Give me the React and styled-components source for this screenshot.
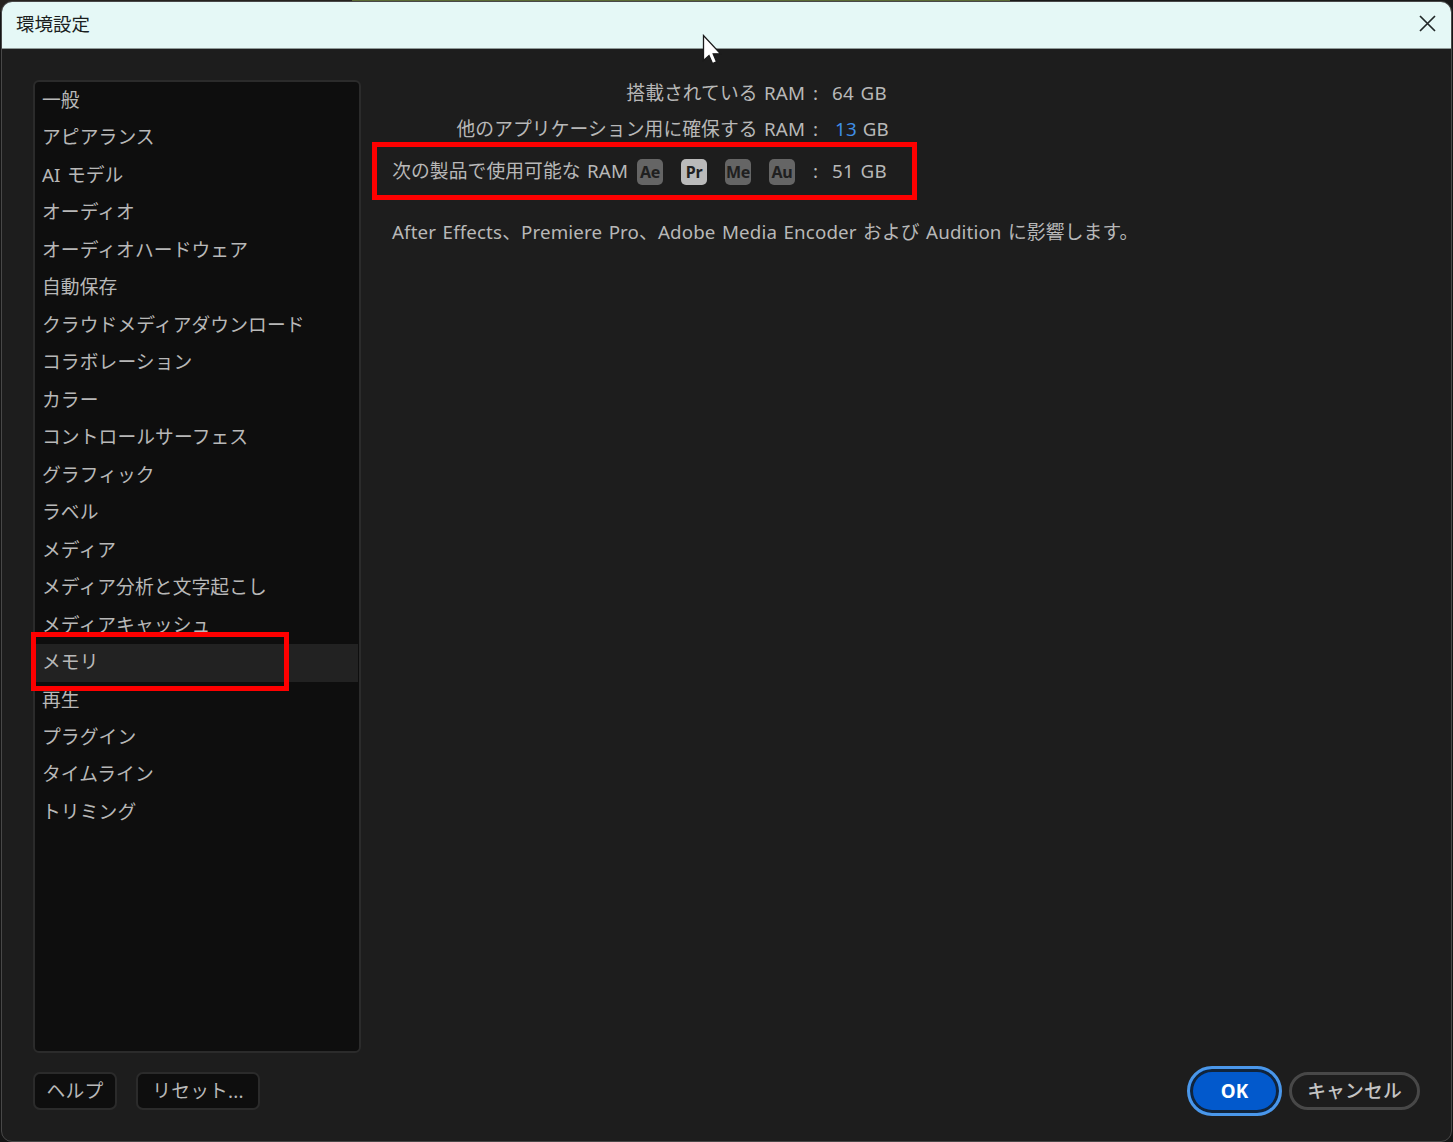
import React from "react";
import styled, { createGlobalStyle, css } from "styled-components";

const GlobalStyle = createGlobalStyle`
  * {
    box-sizing: border-box;
  }

  body {
    margin: 0;
    background: #0b0b0b;
    font-family: "Noto Sans", "Noto Sans CJK JP", sans-serif;
    font-size: 18.75px;
    letter-spacing: 0.1px;
    word-spacing: 1.4px;
    color: #b8b8b8;
  }
`;

const Desktop = styled.div`
  height: 1142px;
  padding: 1px 1px 0 1px;
  overflow: hidden;
  background: linear-gradient(90deg, #26231f 0 352px, #5c6b35 352px 1010px, #191919 1010px) top / 100% 12px no-repeat #151515;
`;

const Dialog = styled.div`
  position: relative;
  display: flex;
  flex-direction: column;
  height: 1141px;
  border: 1px solid #484848;
  border-radius: 11px;
  background: #1d1d1d;
`;

const TitleBar = styled.header`
  display: flex;
  align-items: center;
  justify-content: space-between;
  flex: none;
  height: 47px;
  padding: 0 15px 2px 14px;
  border-bottom: 1px solid #8f9a98;
  border-radius: 10px 10px 0 0;
  background: #e5f8f6;
  color: #1b1f1f;
`;

const Title = styled.h1`
  margin: 0;
  font-size: 18.5px;
  font-weight: 400;
  letter-spacing: 0;
  line-height: 28px;
`;

const CloseButton = styled.button`
  display: flex;
  padding: 0 0 1px;
  border: 0;
  background: none;
  color: #222828;
`;

const Body = styled.div`
  display: flex;
  flex: 1;
  gap: 31px;
  padding: 31px 31px 0 31px;
`;

const Sidebar = styled.ul`
  flex: none;
  width: 328px;
  height: 973px;
  margin: 0;
  padding: 0 1px;
  border: 2px solid #2b2b2b;
  border-radius: 6px;
  background: #0e0e0e;
  list-style: none;
`;

const SidebarItem = styled.li`
  height: 37.47px;
  padding-left: 6px;
  line-height: 36px;
  white-space: nowrap;
  ${(props) =>
    props.$active &&
    css`
      background: #222222;
    `}
`;

const Content = styled.main`
  flex: 1;
`;

const Row = styled.div`
  display: flex;
  align-items: center;
  width: 498px;
  height: 26px;
  margin-top: ${(props) => props.$top || 0}px;
  line-height: 26px;
  white-space: nowrap;
`;

const Label = styled.span`
  flex: 1;
  text-align: right;
`;

const Colon = styled.span`
  width: 27px;
  padding-left: 8px;
`;

const Value = styled.span`
  width: 58px;
  letter-spacing: 0.3px;
`;

const HotText = styled.span`
  margin: 0 -1px 0 3px;
  color: #3f8fe6;
`;

const Apps = styled.span`
  display: flex;
  gap: 18px;
  margin: 1px 10px 0 9px;
`;

const AppBadge = styled.span`
  display: flex;
  align-items: center;
  justify-content: center;
  width: 26px;
  height: 26px;
  border-radius: 5px;
  background: ${(props) => (props.$active ? "#bababa" : "#656565")};
  color: #202020;
  font-size: 16px;
  font-weight: 700;
  letter-spacing: -0.3px;
  line-height: 26px;
`;

const Note = styled.p`
  margin: 34px 0 0;
  letter-spacing: 0.13px;
  line-height: 28px;
  white-space: nowrap;
`;

const Footer = styled.footer`
  display: flex;
  align-items: center;
  flex: none;
  height: 50px;
  margin-bottom: 25px;
  padding: 0 31px 0 31px;
`;

const Button = styled.button`
  height: 38px;
  width: ${(props) => props.$width}px;
  margin-right: 19px;
  padding: 0;
  border: 2px solid #2b2b2b;
  border-radius: 7px;
  background: #0e0e0e;
  color: #b8b8b8;
  font: inherit;
  letter-spacing: 0.2px;
  line-height: 34px;
`;

const Spacer = styled.div`
  flex: 1;
`;

const PillButton = styled(Button)`
  margin: 0;
  border: 3px solid #484848;
  border-radius: 19px;
  background: #1d1d1d;
  color: #c4c4c4;
  font-weight: 500;
  line-height: 32px;
`;

const OkButton = styled(PillButton)`
  height: 50px;
  margin-right: 7px;
  border: 3px solid #4a97ea;
  border-radius: 25px;
  background: #0259cc;
  box-shadow: inset 0 0 0 3px #10243c;
  color: #ffffff;
  font-weight: 700;
`;

const Highlight = styled.div`
  position: absolute;
  top: ${(props) => props.$top}px;
  left: ${(props) => props.$left}px;
  width: ${(props) => props.$width}px;
  height: ${(props) => props.$height}px;
  border: 5px solid #fe0000;
`;

const Cursor = styled.svg`
  position: absolute;
  top: 32px;
  left: 700px;
`;

const categories = [
  "一般",
  "アピアランス",
  "AI モデル",
  "オーディオ",
  "オーディオハードウェア",
  "自動保存",
  "クラウドメディアダウンロード",
  "コラボレーション",
  "カラー",
  "コントロールサーフェス",
  "グラフィック",
  "ラベル",
  "メディア",
  "メディア分析と文字起こし",
  "メディアキャッシュ",
  "メモリ",
  "再生",
  "プラグイン",
  "タイムライン",
  "トリミング",
];

const apps = ["Ae", "Pr", "Me", "Au"];

export default function App() {
  return (
    <Desktop>
      <GlobalStyle />
      <Dialog>
        <TitleBar>
          <Title>環境設定</Title>
          <CloseButton aria-label="閉じる">
            <svg width="17" height="17" viewBox="0 0 17 17" fill="none" stroke="currentColor" strokeWidth="1.7">
              <path d="M1 1L16 16M16 1L1 16" />
            </svg>
          </CloseButton>
        </TitleBar>

        <Body>
          <Sidebar>
            {categories.map((name) => (
              <SidebarItem key={name} $active={name === "メモリ"}>
                {name}
              </SidebarItem>
            ))}
          </Sidebar>

          <Content>
            <Row>
              <Label>搭載されている RAM</Label>
              <Colon>:</Colon>
              <Value>64 GB</Value>
            </Row>
            <Row $top={10}>
              <Label>他のアプリケーション用に確保する RAM</Label>
              <Colon>:</Colon>
              <Value>
                <HotText>13</HotText> GB
              </Value>
            </Row>
            <Row $top={16}>
              <Label>次の製品で使用可能な RAM</Label>
              <Apps>
                {apps.map((app) => (
                  <AppBadge key={app} $active={app === "Pr"}>
                    {app}
                  </AppBadge>
                ))}
              </Apps>
              <Colon>:</Colon>
              <Value>51 GB</Value>
            </Row>
            <Note>After Effects、Premiere Pro、Adobe Media Encoder および Audition に影響します。</Note>
          </Content>
        </Body>

        <Footer>
          <Button $width={84}>ヘルプ</Button>
          <Button $width={124}>リセット...</Button>
          <Spacer />
          <OkButton $width={95}>OK</OkButton>
          <PillButton $width={131}>キャンセル</PillButton>
        </Footer>

        <Highlight $top={140} $left={370} $width={545} $height={58} />
        <Highlight $top={630} $left={29} $width={258} $height={59} />
        <Cursor width="20" height="32" viewBox="0 0 20 32">
          <path
            d="M1.5 1.5V26.5L7 21.5L10.5 29.5L14.5 27.8L11.2 19.8H18.5Z"
            fill="#fff"
            stroke="#1a1a1a"
            strokeWidth="1.3"
          />
        </Cursor>
      </Dialog>
    </Desktop>
  );
}
